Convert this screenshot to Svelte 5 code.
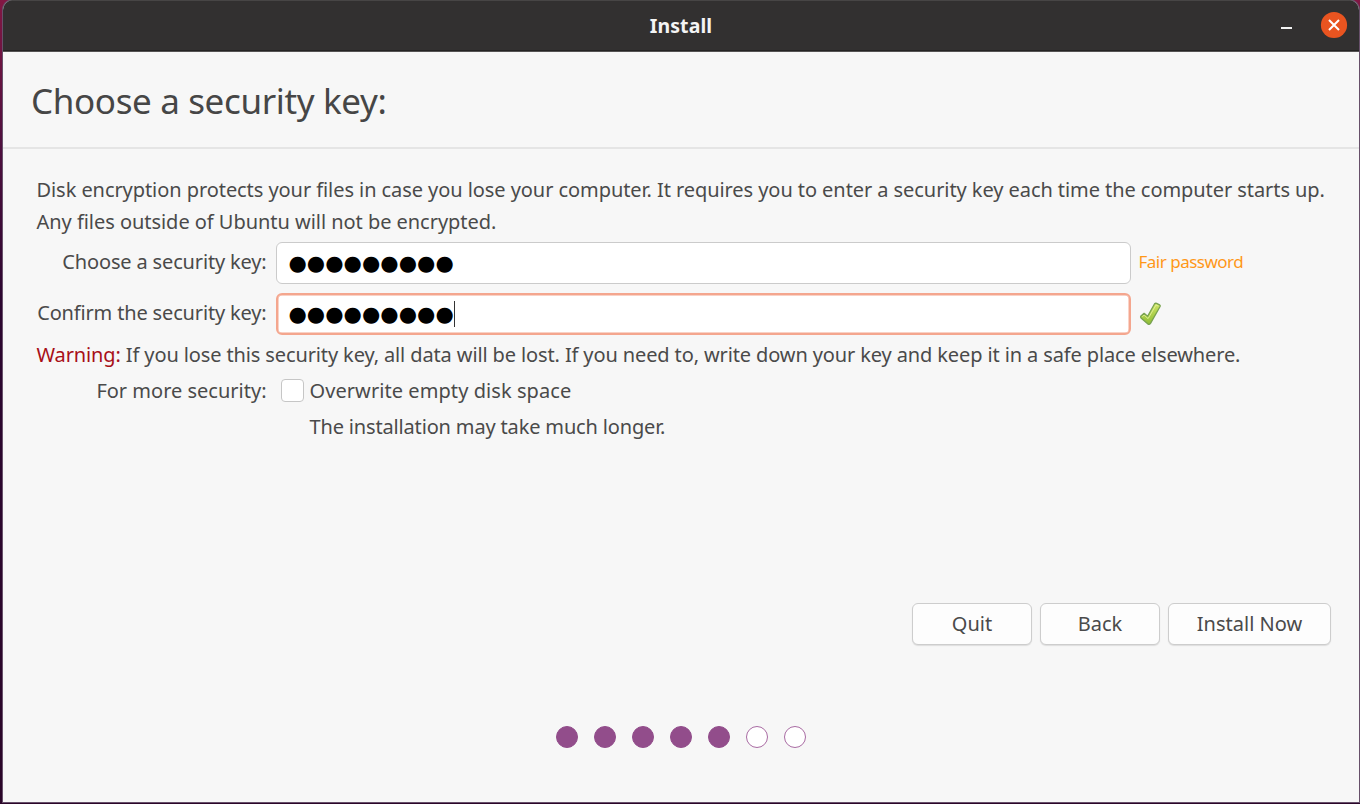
<script>
  const dots = '●'.repeat(9);
  const steps = [true, true, true, true, true, false, false];
</script>

<div class="desktop">
  <main class="window">
    <header class="titlebar">
      <span class="title">Install</span>
      <div class="controls">
        <span class="minimize"></span>
        <svg class="close" viewBox="0 0 28 28" width="28" height="28">
          <circle cx="14" cy="14" r="13.1" fill="#e95420" />
          <path d="M9 9l10 10M19 9l-10 10" stroke="#fff" stroke-width="2" />
        </svg>
      </div>
    </header>

    <h1>Choose a security key:</h1>

    <section class="content">
      <p class="intro">
        <span class="lead">Disk encryption protects your files in case you lose your computer. It requires you to enter a security key each time the computer starts up.</span><br />
        <span class="scope">Any files outside of Ubuntu will not be encrypted.</span>
      </p>

      <div class="row">
        <span class="label tight">Choose a security key:</span>
        <div class="field"><span class="dots">{dots}</span></div>
        <span class="strength">Fair password</span>
      </div>

      <div class="row second">
        <span class="label tight">Confirm the security key:</span>
        <div class="field focused"><span class="dots">{dots}</span><i class="caret"></i></div>
        <svg class="tick" viewBox="0 0 24 24" width="24" height="24">
          <defs>
            <linearGradient id="leaf" x1="0" y1="0" x2="0" y2="1">
              <stop offset="0" stop-color="#d0e565" />
              <stop offset="1" stop-color="#8fbd35" />
            </linearGradient>
          </defs>
          <path d="M1.9 13.9L5.1 11.3 8.6 14.2 15.6 1.8Q16.4 .9 17.6 1.4L20.6 2.8Q21.6 3.5 21.1 4.5L11.5 21.4Q10.4 22.9 9.2 22.2L2 15.9Q1.2 14.9 1.9 13.9Z" fill="url(#leaf)" stroke="#78a250" stroke-width="1.3" stroke-linejoin="round" />
          <path d="M3.4 14.6L5.1 13.1l4 3.5L17 3l2.3 1" fill="none" stroke="#e1f09a" stroke-width=".9" />
        </svg>
      </div>

      <p class="warning"><b>Warning:</b> If you lose this security key, all data will be lost. If you need to, write down your key and keep it in a safe place elsewhere.</p>

      <div class="row extra">
        <span class="label">For more security:</span>
        <span class="checkbox"></span>
        <span class="option">Overwrite empty disk space</span>
      </div>
      <p class="note">The installation may take much longer.</p>
    </section>

    <div class="actions">
      <button class="small">Quit</button>
      <button class="small">Back</button>
      <button class="large">Install Now</button>
    </div>

    <div class="steps">
      {#each steps as done}
        <span class="step" class:done></span>
      {/each}
    </div>
  </main>
</div>

<style>
  :global(body) {
    margin: 0;
    overflow: hidden;
  }
  .desktop {
    box-sizing: border-box;
    width: 1360px;
    height: 804px;
    padding: 0 1px 2px 3px;
    background: linear-gradient(#821743, #50103f 140px, #2c0630 300px, #2b0629);
    font-family: "Noto Sans", sans-serif;
    font-size: 20px;
    color: #4a4a4a;
    white-space: nowrap;
  }
  .window {
    box-sizing: border-box;
    display: flex;
    flex-direction: column;
    height: 802px;
    background: #f7f7f7;
    border-radius: 10px 10px 0 0;
    box-shadow: 0 0 0 1px #67506a;
    overflow: hidden;
  }
  .titlebar {
    box-sizing: border-box;
    display: grid;
    grid-template-columns: 1fr auto 1fr;
    align-items: center;
    height: 52px;
    flex: none;
    background: #323030;
    border-top: 1px solid #474545;
    border-bottom: 1px solid #555353;
    box-shadow: inset 0 -1px #242323;
  }
  .title {
    grid-column: 2;
    padding-bottom: 2px;
    font-size: 19.5px;
    font-weight: 700;
    letter-spacing: .1px;
    color: #f4f4f4;
  }
  .controls {
    display: flex;
    justify-content: flex-end;
    align-items: center;
    gap: 28px;
    padding: 0 11px 2px 0;
  }
  .minimize {
    width: 11px;
    height: 2px;
    margin-top: 6px;
    background: #f2f2f2;
  }
  .close {
    display: block;
  }
  h1 {
    box-sizing: border-box;
    height: 97px;
    flex: none;
    margin: 0;
    padding-left: 28px;
    border-bottom: 2px solid #e5e5e5;
    font-size: 35px;
    font-weight: 400;
    letter-spacing: -.36px;
    line-height: 97px;
    color: #464646;
  }
  .content {
    height: 454px;
    box-sizing: border-box;
    padding: 25px 0 0 33.5px;
  }
  p {
    margin: 0;
  }
  .intro {
    height: 68px;
    line-height: 32px;
  }
  .lead {
    letter-spacing: -.068px;
  }
  .scope {
    letter-spacing: -.04px;
  }
  .row {
    display: flex;
    align-items: center;
    height: 42px;
  }
  .second {
    margin-top: 9px;
  }
  .label {
    width: 230px;
    margin-right: 9px;
    text-align: right;
  }
  .tight {
    padding-bottom: 3px;
    letter-spacing: -.16px;
  }
  .field {
    box-sizing: border-box;
    display: flex;
    align-items: center;
    width: 855px;
    height: 42px;
    margin-right: 8px;
    padding-left: 12px;
    background: #fff;
    border: 1.5px solid #cbcbcb;
    border-radius: 6px;
  }
  .focused {
    padding-left: 11px;
    border: 2px solid #f4a68e;
    box-shadow: inset 0 0 0 .5px #f4a68e;
  }
  .dots {
    font-family: "DejaVu Sans", sans-serif;
    font-size: 21px;
    letter-spacing: .05px;
    line-height: 30px;
    color: #000;
  }
  .caret {
    width: 1px;
    height: 26px;
    background: #333;
  }
  .strength {
    padding-bottom: 3px;
    font-size: 17px;
    letter-spacing: -.5px;
    color: #ff9719;
  }
  .warning {
    height: 36px;
    padding-top: 4px;
    line-height: 32px;
    letter-spacing: -.122px;
    box-sizing: border-box;
  }
  .warning b {
    font-weight: 400;
    color: #a80f17;
  }
  .extra {
    height: 38px;
  }
  .checkbox {
    box-sizing: border-box;
    width: 23px;
    height: 23px;
    margin: 0 6px 0 5px;
    background: #fff;
    border: 1.5px solid #c6c6c6;
    border-radius: 4px;
  }
  .option {
    letter-spacing: .07px;
  }
  .note {
    padding-left: 273px;
    line-height: 36px;
    letter-spacing: -.16px;
  }
  .actions {
    display: flex;
    justify-content: flex-end;
    gap: 8px;
    padding-right: 28px;
    height: 43px;
  }
  button {
    box-sizing: border-box;
    height: 42px;
    padding: 0;
    font: inherit;
    line-height: 38px;
    color: #4a4a4a;
    background: #fdfdfd;
    border: 1.5px solid #cdcdcd;
    border-radius: 6px;
    box-shadow: 0 1px 1px #ddd;
  }
  .small {
    width: 120px;
  }
  .large {
    width: 163px;
  }
  .steps {
    display: flex;
    justify-content: center;
    gap: 16px;
    margin-top: 80px;
  }
  .step {
    box-sizing: border-box;
    width: 22px;
    height: 22px;
    border: 1.5px solid #a96ba3;
    border-radius: 50%;
    background: #fff;
  }
  .done {
    background: #924d8b;
    border-color: #924d8b;
  }
</style>
